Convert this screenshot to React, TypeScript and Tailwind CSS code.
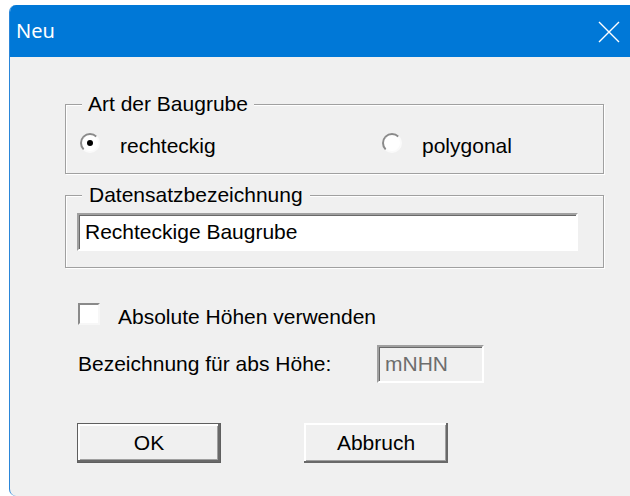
import React from 'react';

// Classic Win32 dialog: "Neu" with two group boxes, a checkbox and OK / Abbruch

const Radio: React.FC<{ checked?: boolean; label: string; className?: string }> = ({ checked, label, className }) => (
  <label className={`flex items-start ${className ?? ''}`}>
    <span className="mt-[-1px] flex h-[20px] w-[20px] shrink-0 items-center justify-center rounded-full border-2 border-t-[#8a8a8a] border-l-[#8a8a8a] border-r-[#fafafa] border-b-[#fafafa] bg-white">
      {checked && <span className="h-[6px] w-[6px] rounded-full bg-black" />}
    </span>
    <span className="ml-[20px]">{label}</span>
  </label>
);

const Sunken: React.FC<{ className?: string; children?: React.ReactNode }> = ({ className, children }) => (
  <div
    className={`flex items-center border-2 border-t-[#a0a0a0] border-l-[#a0a0a0] border-r-white border-b-white shadow-[inset_1px_1px_0_#696969] ${className ?? ''}`}
  >
    {children}
  </div>
);

const Button: React.FC<{ label: string; isDefault?: boolean }> = ({ label, isDefault }) => (
  <button
    className={`flex h-[40px] w-[144px] items-center justify-center bg-[#f0f0f0] text-black shadow-[inset_-2px_-2px_0_#696969,inset_2px_2px_0_#ffffff,inset_-3px_-3px_0_#a0a0a0] ${
      isDefault ? 'border border-[#5f5f5f]' : ''
    }`}
  >
    {label}
  </button>
);

export default function App() {
  return (
    <div className="h-[496px] w-[630px] overflow-hidden bg-white pl-[9px] pt-[5px] font-['Liberation_Sans',Arial,sans-serif] text-[21px] leading-[24px] text-black">
      <div className="flex h-[491px] w-[640px] flex-col overflow-hidden rounded-tl-[7px] rounded-bl-[7px] border-l border-[#2a86d9] bg-[#f0f0f0]">
        {/* title bar */}
        <div className="flex h-[52px] shrink-0 items-center justify-between bg-[#0078d7] pl-[6px] pr-[29px]">
          <span className="font-['Noto_Sans',sans-serif] text-[20px] text-white">Neu</span>
          <svg width="22" height="22" viewBox="0 0 22 22" className="mt-[1px]">
            <path d="M1 1 L21 21 M21 1 L1 21" stroke="#ffffff" strokeWidth="1.4" fill="none" />
          </svg>
        </div>

        {/* dialog body */}
        <div className="flex flex-col pl-[55px] pt-[35px]">
          <fieldset className="w-[539px] border border-[#a0a0a0] px-[14px] pb-[15px] pt-[18px] shadow-[1px_1px_0_#ffffff,inset_1px_1px_0_#ffffff]">
            <legend className="ml-[2px] bg-[#f0f0f0] px-[6px]">Art der Baugrube</legend>
            <div className="flex">
              <Radio checked label="rechteckig" className="w-[302px]" />
              <Radio label="polygonal" />
            </div>
          </fieldset>

          <fieldset className="mt-[9px] w-[539px] border border-[#a0a0a0] pb-[16px] pl-[11px] pt-[6px] shadow-[1px_1px_0_#ffffff,inset_1px_1px_0_#ffffff]">
            <legend className="ml-[5px] bg-[#f0f0f0] px-[7px]">Datensatzbezeichnung</legend>
            <Sunken className="h-[38px] w-[501px] bg-white pl-[6px]">Rechteckige Baugrube</Sunken>
          </fieldset>

          <div className="ml-[13px] mt-[35px] flex items-start">
            <span className="h-[22px] w-[22px] border-2 border-t-[#8a8a8a] border-l-[#8a8a8a] border-r-[#f7f7f7] border-b-[#f7f7f7] bg-white" />
            <span className="ml-[18px] mt-[2px]">Absolute Höhen verwenden</span>
          </div>

          <div className="ml-[13px] mt-[16px] flex items-center">
            <span className="w-[299px]">Bezeichnung für abs Höhe:</span>
            <Sunken className="h-[38px] w-[107px] pl-[6px] text-[#6d6d6d]">mNHN</Sunken>
          </div>

          <div className="ml-[12px] mt-[40px] flex gap-[83px]">
            <Button label="OK" isDefault />
            <Button label="Abbruch" />
          </div>
        </div>
      </div>
    </div>
  );
}
